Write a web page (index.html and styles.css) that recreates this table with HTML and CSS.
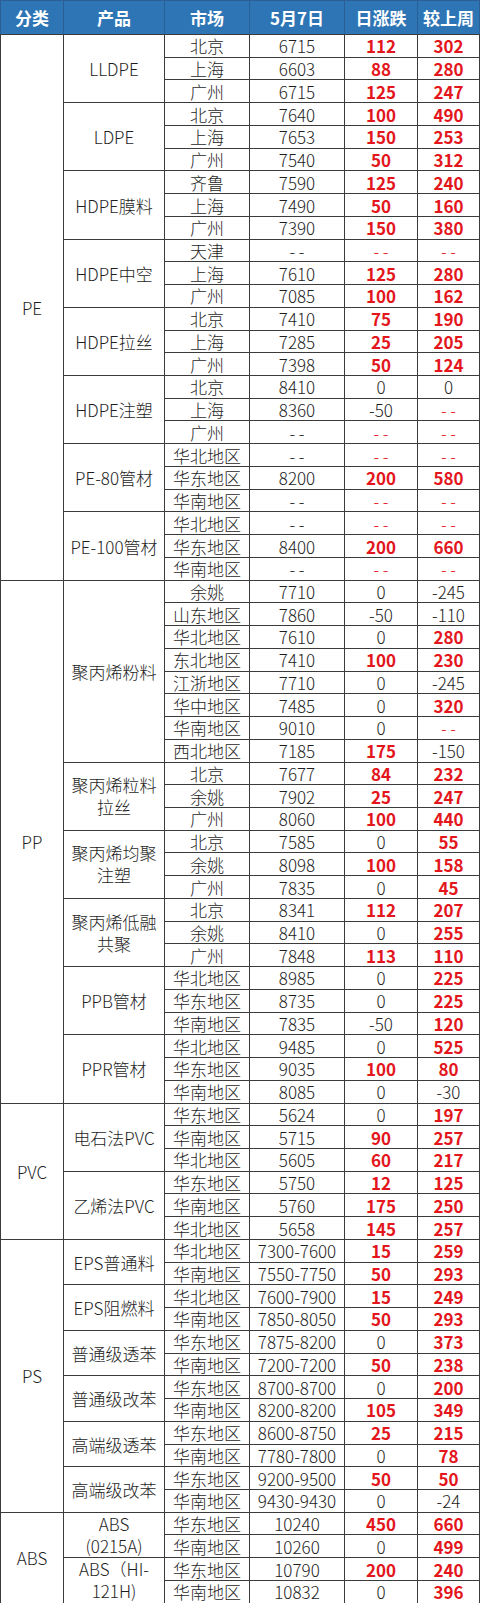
FILE: index.html
```html
<!DOCTYPE html>
<html lang="zh">
<head>
<meta charset="utf-8">
<title>塑料价格</title>
<link rel="stylesheet" href="styles.css">
</head>
<body>
<table class="price">
<colgroup><col class="c1"><col class="c2"><col class="c3"><col class="c4"><col class="c5"><col class="c6"></colgroup>
<thead>
<tr><th>分类</th><th>产品</th><th>市场</th><th>5月7日</th><th>日涨跌</th><th>较上周</th></tr>
</thead>
<tbody>
<tr><td rowspan="24">PE</td><td rowspan="3">LLDPE</td><td>北京</td><td>6715</td><td class="up">112</td><td class="up">302</td></tr>
<tr><td>上海</td><td>6603</td><td class="up">88</td><td class="up">280</td></tr>
<tr><td>广州</td><td>6715</td><td class="up">125</td><td class="up">247</td></tr>
<tr><td rowspan="3">LDPE</td><td>北京</td><td>7640</td><td class="up">100</td><td class="up">490</td></tr>
<tr><td>上海</td><td>7653</td><td class="up">150</td><td class="up">253</td></tr>
<tr><td>广州</td><td>7540</td><td class="up">50</td><td class="up">312</td></tr>
<tr><td rowspan="3">HDPE膜料</td><td>齐鲁</td><td>7590</td><td class="up">125</td><td class="up">240</td></tr>
<tr><td>上海</td><td>7490</td><td class="up">50</td><td class="up">160</td></tr>
<tr><td>广州</td><td>7390</td><td class="up">150</td><td class="up">380</td></tr>
<tr><td rowspan="3">HDPE中空</td><td>天津</td><td>- -</td><td class="na">- -</td><td class="na">- -</td></tr>
<tr><td>上海</td><td>7610</td><td class="up">125</td><td class="up">280</td></tr>
<tr><td>广州</td><td>7085</td><td class="up">100</td><td class="up">162</td></tr>
<tr><td rowspan="3">HDPE拉丝</td><td>北京</td><td>7410</td><td class="up">75</td><td class="up">190</td></tr>
<tr><td>上海</td><td>7285</td><td class="up">25</td><td class="up">205</td></tr>
<tr><td>广州</td><td>7398</td><td class="up">50</td><td class="up">124</td></tr>
<tr><td rowspan="3">HDPE注塑</td><td>北京</td><td>8410</td><td>0</td><td>0</td></tr>
<tr><td>上海</td><td>8360</td><td>-50</td><td class="na">- -</td></tr>
<tr><td>广州</td><td>- -</td><td class="na">- -</td><td class="na">- -</td></tr>
<tr><td rowspan="3">PE-80管材</td><td>华北地区</td><td>- -</td><td class="na">- -</td><td class="na">- -</td></tr>
<tr><td>华东地区</td><td>8200</td><td class="up">200</td><td class="up">580</td></tr>
<tr><td>华南地区</td><td>- -</td><td class="na">- -</td><td class="na">- -</td></tr>
<tr><td rowspan="3">PE-100管材</td><td>华北地区</td><td>- -</td><td class="na">- -</td><td class="na">- -</td></tr>
<tr><td>华东地区</td><td>8400</td><td class="up">200</td><td class="up">660</td></tr>
<tr><td>华南地区</td><td>- -</td><td class="na">- -</td><td class="na">- -</td></tr>

<tr><td rowspan="23">PP</td><td rowspan="8">聚丙烯粉料</td><td>余姚</td><td>7710</td><td>0</td><td>-245</td></tr>
<tr><td>山东地区</td><td>7860</td><td>-50</td><td>-110</td></tr>
<tr><td>华北地区</td><td>7610</td><td>0</td><td class="up">280</td></tr>
<tr><td>东北地区</td><td>7410</td><td class="up">100</td><td class="up">230</td></tr>
<tr><td>江浙地区</td><td>7710</td><td>0</td><td>-245</td></tr>
<tr><td>华中地区</td><td>7485</td><td>0</td><td class="up">320</td></tr>
<tr><td>华南地区</td><td>9010</td><td>0</td><td class="na">- -</td></tr>
<tr><td>西北地区</td><td>7185</td><td class="up">175</td><td>-150</td></tr>
<tr><td rowspan="3" class="two">聚丙烯粒料<br>拉丝</td><td>北京</td><td>7677</td><td class="up">84</td><td class="up">232</td></tr>
<tr><td>余姚</td><td>7902</td><td class="up">25</td><td class="up">247</td></tr>
<tr><td>广州</td><td>8060</td><td class="up">100</td><td class="up">440</td></tr>
<tr><td rowspan="3" class="two">聚丙烯均聚<br>注塑</td><td>北京</td><td>7585</td><td>0</td><td class="up">55</td></tr>
<tr><td>余姚</td><td>8098</td><td class="up">100</td><td class="up">158</td></tr>
<tr><td>广州</td><td>7835</td><td>0</td><td class="up">45</td></tr>
<tr><td rowspan="3" class="two">聚丙烯低融<br>共聚</td><td>北京</td><td>8341</td><td class="up">112</td><td class="up">207</td></tr>
<tr><td>余姚</td><td>8410</td><td>0</td><td class="up">255</td></tr>
<tr><td>广州</td><td>7848</td><td class="up">113</td><td class="up">110</td></tr>
<tr><td rowspan="3">PPB管材</td><td>华北地区</td><td>8985</td><td>0</td><td class="up">225</td></tr>
<tr><td>华东地区</td><td>8735</td><td>0</td><td class="up">225</td></tr>
<tr><td>华南地区</td><td>7835</td><td>-50</td><td class="up">120</td></tr>
<tr><td rowspan="3">PPR管材</td><td>华北地区</td><td>9485</td><td>0</td><td class="up">525</td></tr>
<tr><td>华东地区</td><td>9035</td><td class="up">100</td><td class="up">80</td></tr>
<tr><td>华南地区</td><td>8085</td><td>0</td><td>-30</td></tr>

<tr><td rowspan="6">PVC</td><td rowspan="3">电石法PVC</td><td>华东地区</td><td>5624</td><td>0</td><td class="up">197</td></tr>
<tr><td>华南地区</td><td>5715</td><td class="up">90</td><td class="up">257</td></tr>
<tr><td>华北地区</td><td>5605</td><td class="up">60</td><td class="up">217</td></tr>
<tr><td rowspan="3">乙烯法PVC</td><td>华东地区</td><td>5750</td><td class="up">12</td><td class="up">125</td></tr>
<tr><td>华南地区</td><td>5760</td><td class="up">175</td><td class="up">250</td></tr>
<tr><td>华北地区</td><td>5658</td><td class="up">145</td><td class="up">257</td></tr>

<tr><td rowspan="12">PS</td><td rowspan="2">EPS普通料</td><td>华北地区</td><td>7300-7600</td><td class="up">15</td><td class="up">259</td></tr>
<tr><td>华南地区</td><td>7550-7750</td><td class="up">50</td><td class="up">293</td></tr>
<tr><td rowspan="2">EPS阻燃料</td><td>华北地区</td><td>7600-7900</td><td class="up">15</td><td class="up">249</td></tr>
<tr><td>华南地区</td><td>7850-8050</td><td class="up">50</td><td class="up">293</td></tr>
<tr><td rowspan="2">普通级透苯</td><td>华东地区</td><td>7875-8200</td><td>0</td><td class="up">373</td></tr>
<tr><td>华南地区</td><td>7200-7200</td><td class="up">50</td><td class="up">238</td></tr>
<tr><td rowspan="2">普通级改苯</td><td>华东地区</td><td>8700-8700</td><td>0</td><td class="up">200</td></tr>
<tr><td>华南地区</td><td>8200-8200</td><td class="up">105</td><td class="up">349</td></tr>
<tr><td rowspan="2">高端级透苯</td><td>华东地区</td><td>8600-8750</td><td class="up">25</td><td class="up">215</td></tr>
<tr><td>华南地区</td><td>7780-7800</td><td>0</td><td class="up">78</td></tr>
<tr><td rowspan="2">高端级改苯</td><td>华东地区</td><td>9200-9500</td><td class="up">50</td><td class="up">50</td></tr>
<tr><td>华南地区</td><td>9430-9430</td><td>0</td><td>-24</td></tr>

<tr><td rowspan="4">ABS</td><td rowspan="2" class="two">ABS<br>(0215A)</td><td>华东地区</td><td>10240</td><td class="up">450</td><td class="up">660</td></tr>
<tr><td>华南地区</td><td>10260</td><td>0</td><td class="up">499</td></tr>
<tr><td rowspan="2" class="two">ABS（HI-<br>121H)</td><td>华东地区</td><td>10790</td><td class="up">200</td><td class="up">240</td></tr>
<tr><td>华南地区</td><td>10832</td><td>0</td><td class="up">396</td></tr>
</tbody>
</table>
</body>
</html>
```

FILE: styles.css
```css
html, body {
  margin: 0;
  padding: 0;
  background: #ffffff;
}

.price {
  border-collapse: collapse;
  table-layout: fixed;
  width: 479px;
  font-family: "Noto Sans CJK SC", "Noto Sans", sans-serif;
  font-size: 17px;
  font-weight: 300;
  color: #1e1e1e;
}

.c1 { width: 63px; }
.c2 { width: 101px; }
.c3 { width: 85px; }
.c4 { width: 95px; }
.c5 { width: 73px; }
.c6 { width: 62px; }

.price th {
  height: 33px;
  padding: 0;
  background: #2e75b6;
  color: #ffffff;
  font-weight: 700;
  text-align: center;
  border: 1px solid #2a5f94;
  border-bottom-color: #3b3b3b;
}

.price td {
  height: 21.74px;
  padding: 0;
  text-align: center;
  vertical-align: middle;
  border: 1px solid #3b3b3b;
  line-height: 21px;
  white-space: nowrap;
}

.price td.two {
  line-height: 22px;
}

.price td.up {
  color: #e3161c;
  font-weight: 700;
}

.price td.na {
  color: #e3161c;
}
```
